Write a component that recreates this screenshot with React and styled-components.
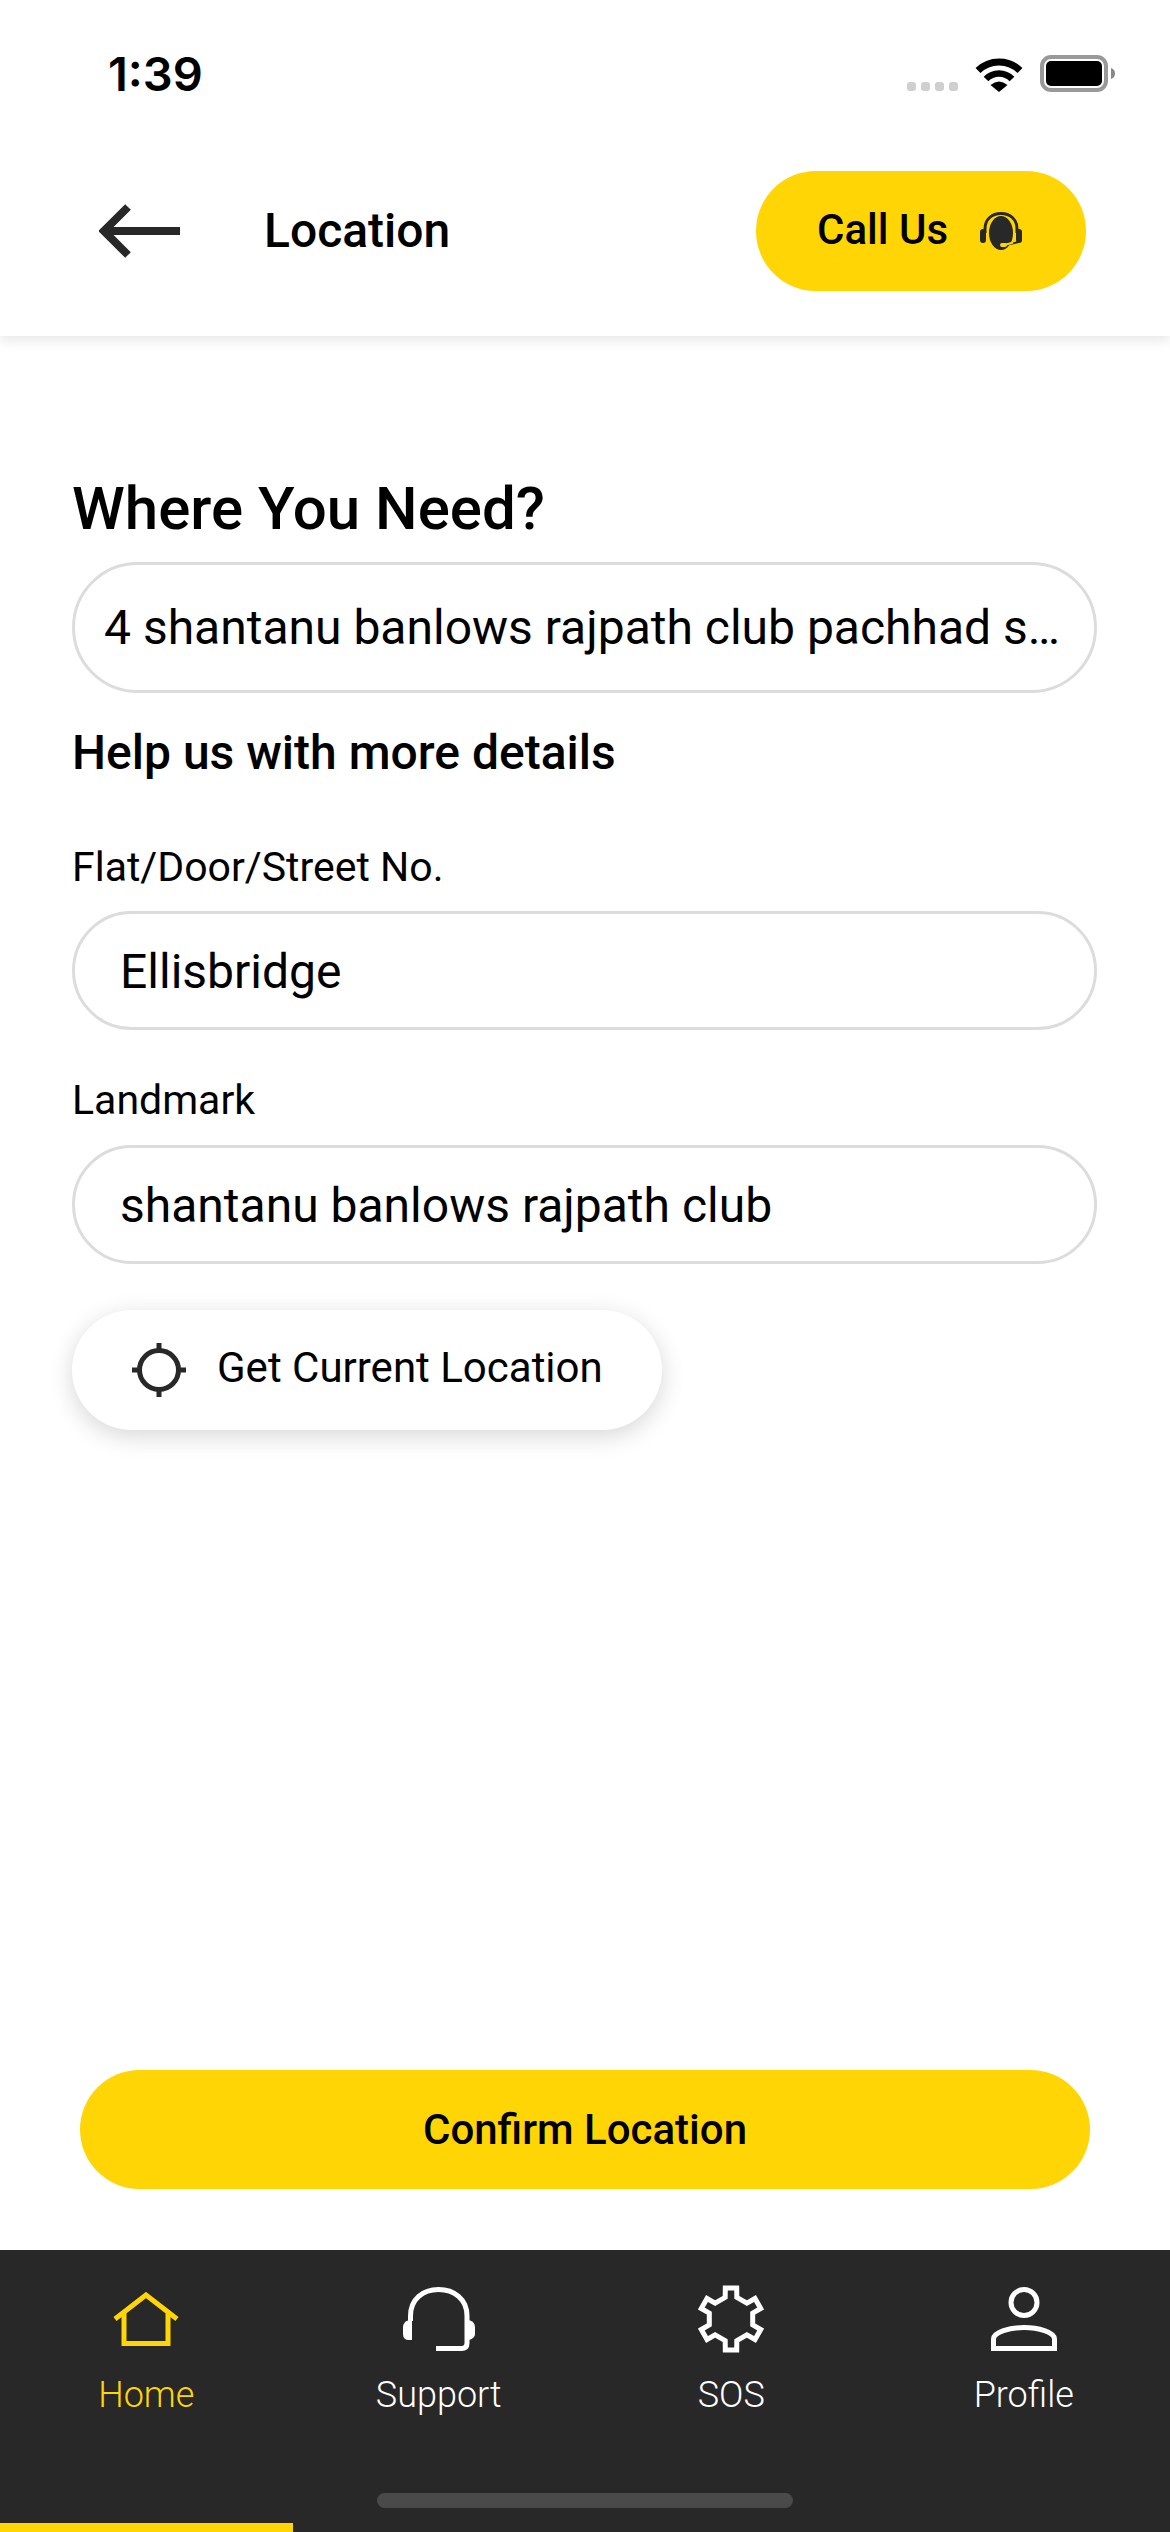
import React from "react";
import styled, { createGlobalStyle } from "styled-components";

const Global = createGlobalStyle`
  html, body { margin: 0; padding: 0; background: #fff; }
  * { box-sizing: border-box; }
`;

const YELLOW = "#FFD506";
const DARK = "#282828";

const Page = styled.div`
  width: 1170px;
  height: 2532px;
  display: flex;
  flex-direction: column;
  background: #fff;
  overflow: hidden;
  font-family: Roboto, "Liberation Sans", sans-serif;
  color: #000;
`;
const TopBar = styled.header`
  height: 336px;
  flex: none;
  background: #fff;
  box-shadow: 0 4px 12px rgba(0, 0, 0, 0.1);
  position: relative;
  z-index: 1;
`;
const StatusBar = styled.div`
  height: 146px;
  display: flex;
  align-items: center;
  justify-content: space-between;
  padding: 0 55px 0 108px;
`;
const Time = styled.span`
  font-family: Inter, sans-serif;
  font-size: 47px;
  font-weight: 600;
`;
const StatusIcons = styled.div`
  display: flex;
  align-items: flex-end;
  gap: 17px;
`;
const Signal = styled.div`
  display: flex;
  gap: 5px;
  margin-bottom: 1px;
`;
const SignalDot = styled.span`
  width: 9px;
  height: 9px;
  border-radius: 3px;
  background: #cfcfcf;
`;
const HeaderRow = styled.div`
  margin-top: 25px;
  height: 120px;
  display: flex;
  align-items: center;
  padding: 0 84px 0 99px;
`;
const ScreenTitle = styled.h1`
  margin: 0 0 0 84px;
  font-size: 48px;
  font-weight: 500;
  line-height: 56px;
`;
const CallButton = styled.button`
  margin-left: auto;
  width: 330px;
  height: 120px;
  border: 0;
  border-radius: 60px;
  background: ${YELLOW};
  display: flex;
  align-items: center;
  padding: 0 0 0 61px;
  gap: 32px;
  font-family: inherit;
  font-size: 42px;
  font-weight: 500;
  color: #000;
`;
const CallLabel = styled.span`
  margin-bottom: 3px;
`;
const Main = styled.main`
  flex: 1;
  display: flex;
  flex-direction: column;
  padding: 139px 73px 0 72px;
`;
const Heading = styled.h2`
  margin: 0;
  font-size: 60px;
  font-weight: 500;
  line-height: 68px;
`;
const AddressField = styled.div`
  margin-top: 19px;
  height: 131px;
  border: 3px solid #dcdcdc;
  border-radius: 66px;
  display: flex;
  align-items: center;
  padding-left: 29px;
  font-size: 48px;
  white-space: nowrap;
`;
const SubHeading = styled.h3`
  margin: 32px 0 0;
  font-size: 48px;
  font-weight: 500;
  line-height: 56px;
`;
const FieldLabel = styled.label`
  display: block;
  margin-top: ${(p) => p.$gap}px;
  font-size: 41px;
  line-height: 48px;
`;
const TextField = styled.div`
  margin-top: ${(p) => p.$gap}px;
  height: 119px;
  border: 3px solid #dcdcdc;
  border-radius: 60px;
  display: flex;
  align-items: center;
  padding: 2px 0 0 45px;
  font-size: 48px;
  white-space: nowrap;
`;
const LocationButton = styled.button`
  margin-top: 46px;
  width: 590px;
  height: 120px;
  border: 0;
  border-radius: 60px;
  background: #fff;
  box-shadow: 0 6px 24px rgba(0, 0, 0, 0.16);
  display: flex;
  align-items: center;
  gap: 31px;
  padding: 0 0 0 60px;
  font-family: inherit;
  font-size: 42px;
  font-weight: 400;
  color: #000;
`;
const LocationLabel = styled.span`
  margin-bottom: 5px;
`;
const Footer = styled.div`
  flex: none;
  padding: 0 80px 61px;
`;
const ConfirmButton = styled.button`
  width: 100%;
  height: 119px;
  border: 0;
  border-radius: 60px;
  background: ${YELLOW};
  font-family: inherit;
  font-size: 42px;
  font-weight: 500;
  color: #000;
`;
const Nav = styled.nav`
  flex: none;
  height: 282px;
  background: ${DARK};
  position: relative;
  display: grid;
  grid-template-columns: repeat(4, 1fr);
  align-items: start;
`;
const NavItem = styled.div`
  display: flex;
  flex-direction: column;
  align-items: center;
  color: ${(p) => (p.$active ? YELLOW : "#fff")};
`;
const NavIcon = styled.div`
  height: 104px;
  display: flex;
  align-items: flex-end;
  justify-content: center;
  padding-bottom: ${(p) => p.$pb}px;
`;
const NavLabel = styled.span`
  margin-top: 20px;
  font-size: 36px;
  font-weight: 300;
  line-height: 42px;
`;
const HomeIndicator = styled.div`
  position: absolute;
  left: 377px;
  bottom: 24px;
  width: 416px;
  height: 15px;
  border-radius: 8px;
  background: #4a4a4a;
`;
const ActiveBar = styled.div`
  position: absolute;
  left: 0;
  bottom: 0;
  width: 293px;
  height: 9px;
  background: ${YELLOW};
`;

const Wifi = () => (
  <svg width="48" height="37" viewBox="0 0 48 37">
    <path d="M3 15.5A30 30 0 0 1 45 15.5" fill="none" stroke="#000" strokeWidth="7" />
    <path d="M11 24A18 18 0 0 1 37 24" fill="none" stroke="#000" strokeWidth="6.5" />
    <path d="M15.5 30Q24 23 32.5 30L24 37Z" fill="#000" />
  </svg>
);
const Battery = () => (
  <svg width="75" height="37" viewBox="0 0 75 37">
    <rect x="2" y="2" width="64" height="33" rx="9" fill="none" stroke="#999" strokeWidth="4" />
    <rect x="6" y="6" width="56" height="25" rx="5" fill="#000" />
    <path d="M71 13C74 14 75 16 75 18.5C75 21 74 23 71 24Z" fill="#888" />
  </svg>
);
const BackArrow = () => (
  <svg width="81" height="54" viewBox="0 0 81 54">
    <path d="M6 27H81M29 3L5 27L29 51" fill="none" stroke={DARK} strokeWidth="8" />
  </svg>
);
const Headset = () => (
  <svg width="42" height="38" viewBox="0 0 42 38">
    <path d="M5 21V17C5 7 12 1.5 21 1.5C30 1.5 37 7 37 17V21" fill="none" stroke={DARK} strokeWidth="3" />
    <ellipse cx="21" cy="21" rx="12" ry="17" fill={DARK} />
    <rect x="0" y="17" width="6" height="14" rx="3" fill={DARK} />
    <rect x="36" y="17" width="6" height="14" rx="3" fill={DARK} />
    <path d="M38 30C36 31 32 32 24 33" fill="none" stroke={DARK} strokeWidth="2" />
    <path d="M33 30.5C31 31.5 28 32 24 33" fill="none" stroke={YELLOW} strokeWidth="2" />
    <rect x="20" y="31" width="7" height="4" rx="2" fill={YELLOW} />
  </svg>
);
const Crosshair = () => (
  <svg width="54" height="54" viewBox="0 0 54 54">
    <circle cx="27" cy="27" r="19.5" fill="none" stroke={DARK} strokeWidth="5" />
    <path d="M27 0V8M27 46V54M0 27H8M46 27H54" stroke={DARK} strokeWidth="5" />
  </svg>
);
const HomeIcon = () => (
  <svg width="66" height="54" viewBox="0 0 66 54">
    <path d="M2 27L33 3L64 27M11 20V51.5H55V20" fill="none" stroke={YELLOW} strokeWidth="5" />
  </svg>
);
const SupportIcon = () => (
  <svg width="72" height="64" viewBox="0 0 72 64">
    <path d="M7.5 34V29C7.5 12 20 2.5 35.5 2.5C51 2.5 64 12 64 29V56Q64 61.5 58.5 61.5H33" fill="none" stroke="#fff" strokeWidth="5" />
    <path d="M9 33H6Q0 35 0 40V47Q0 53 6 53H9Z" fill="#fff" />
    <path d="M62 33H66Q72 35 72 40V47Q72 51 66 53H62Z" fill="#fff" />
  </svg>
);
const gearPoints = Array.from({ length: 6 }, (_, i) => {
  const a = (i * 60 - 90) * (Math.PI / 180);
  const p = (r, d) => {
    const t = a + (d * Math.PI) / 180;
    return `${(34 + r * Math.cos(t)).toFixed(1)},${(34 + r * Math.sin(t)).toFixed(1)}`;
  };
  return [p(22.5, -15), p(31.5, -10.5), p(31.5, 10.5), p(22.5, 15)].join(" ");
}).join(" ");
const GearIcon = () => (
  <svg width="68" height="68" viewBox="0 0 68 68">
    <polygon points={gearPoints} fill="none" stroke="#fff" strokeWidth="5" />
  </svg>
);
const ProfileIcon = () => (
  <svg width="66" height="64" viewBox="0 0 66 64">
    <circle cx="33" cy="15.5" r="13" fill="none" stroke="#fff" strokeWidth="5" />
    <path d="M2.5 61.5V52C2.5 45 19 40.5 33 40.5C47 40.5 63.5 45 63.5 52V61.5Z" fill="none" stroke="#fff" strokeWidth="5" />
  </svg>
);

const navItems = [
  { label: "Home", icon: <HomeIcon />, pb: 8, active: true },
  { label: "Support", icon: <SupportIcon />, pb: 3 },
  { label: "SOS", icon: <GearIcon />, pb: 1 },
  { label: "Profile", icon: <ProfileIcon />, pb: 3 },
];

export default function App() {
  return (
    <Page>
      <Global />
      <TopBar>
        <StatusBar>
          <Time>1:39</Time>
          <StatusIcons>
            <Signal>
              <SignalDot />
              <SignalDot />
              <SignalDot />
              <SignalDot />
            </Signal>
            <Wifi />
            <Battery />
          </StatusIcons>
        </StatusBar>
        <HeaderRow>
          <BackArrow />
          <ScreenTitle>Location</ScreenTitle>
          <CallButton>
            <CallLabel>Call Us</CallLabel>
            <Headset />
          </CallButton>
        </HeaderRow>
      </TopBar>
      <Main>
        <Heading>Where You Need?</Heading>
        <AddressField>4 shantanu banlows rajpath club pachhad s…</AddressField>
        <SubHeading>Help us with more details</SubHeading>
        <FieldLabel $gap={62}>Flat/Door/Street No.</FieldLabel>
        <TextField $gap={20}>Ellisbridge</TextField>
        <FieldLabel $gap={46}>Landmark</FieldLabel>
        <TextField $gap={21}>shantanu banlows rajpath club</TextField>
        <LocationButton>
          <Crosshair />
          <LocationLabel>Get Current Location</LocationLabel>
        </LocationButton>
      </Main>
      <Footer>
        <ConfirmButton>Confirm Location</ConfirmButton>
      </Footer>
      <Nav>
        {navItems.map((n) => (
          <NavItem key={n.label} $active={n.active}>
            <NavIcon $pb={n.pb}>{n.icon}</NavIcon>
            <NavLabel>{n.label}</NavLabel>
          </NavItem>
        ))}
        <HomeIndicator />
        <ActiveBar />
      </Nav>
    </Page>
  );
}
